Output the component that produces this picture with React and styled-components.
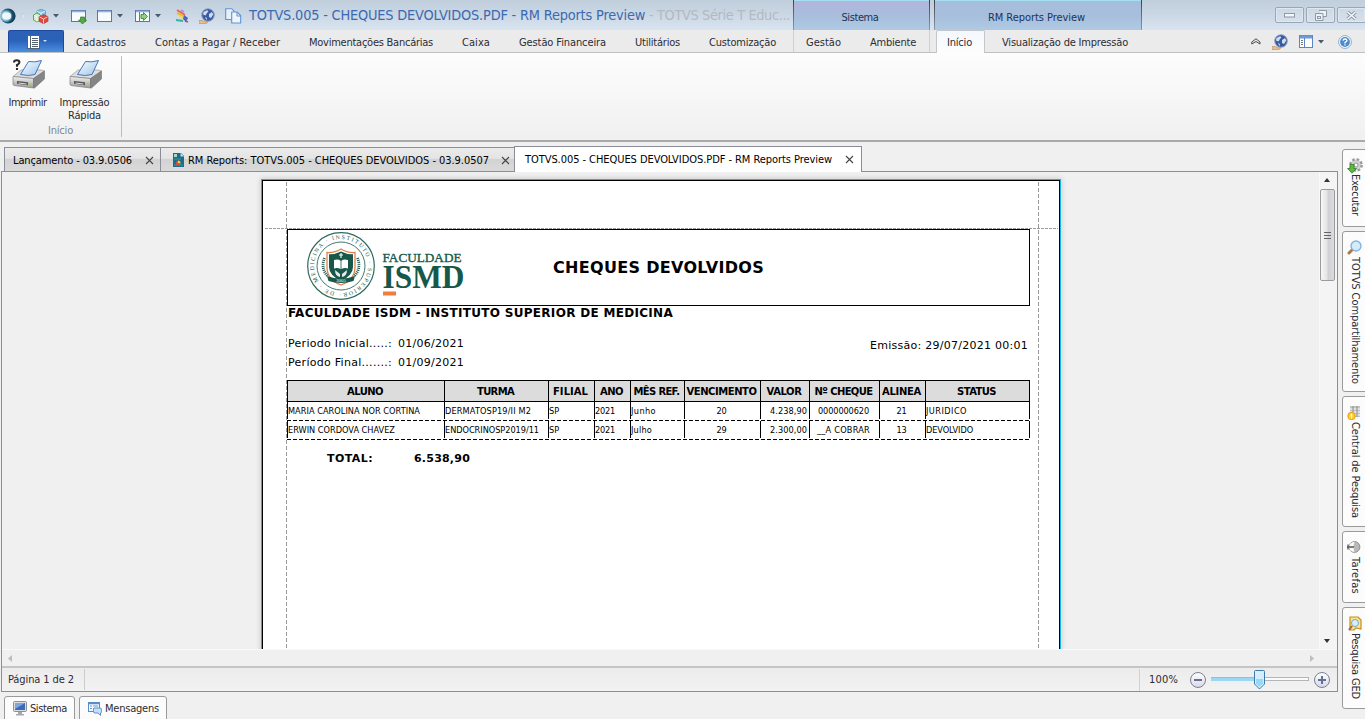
import React, { useLayoutEffect, useRef } from 'react';
import styled, { createGlobalStyle } from 'styled-components';

const Global = createGlobalStyle`
  * { box-sizing: border-box; }
  html, body { margin: 0; padding: 0; overflow: hidden; }
  body {
    background: #f0f0f0;
    font-family: "DejaVu Sans Condensed", "DejaVu Sans", sans-serif;
    font-stretch: condensed;
    font-size: 11px;
    color: #2b2b33;
  }
  svg { display: block; flex: none; }
`;

/* ---------- text with a fixed advance width ---------- */
const FitBox = styled.span`
  display: inline-block;
  flex: none;
  white-space: pre;
  ${(p) => (p.$vertical ? `height: ${p.$w}px; writing-mode: vertical-rl;` : `width: ${p.$w}px;`)}
`;
function Fit({ w, vertical, children }) {
  const ref = useRef(null);
  useLayoutEffect(() => {
    const el = ref.current;
    el.style.letterSpacing = '0px';
    const r = el.getBoundingClientRect();
    const natural = vertical ? r.height : r.width;
    el.style.letterSpacing = `${(w - natural) / String(children).length}px`;
  }, [w, vertical, children]);
  return (
    <FitBox $w={w} $vertical={vertical}>
      <span ref={ref}>{children}</span>
    </FitBox>
  );
}

/* ---------- shell ---------- */
const Window = styled.div`
  width: 1365px;
  height: 719px;
  display: flex;
  flex-direction: column;
  background: #f0f0f0;
  overflow: hidden;
`;
const TitleBar = styled.header`
  height: 30px;
  flex: none;
  display: flex;
  background: linear-gradient(#c1cedb, #c9d6e3 45%, #d9e5f1);
`;
const QuickBar = styled.div`
  width: 249px;
  display: flex;
  align-items: center;
  padding-top: 2px;
`;
const Slot = styled.span`
  display: flex;
  align-items: center;
  gap: 4px;
  width: ${(p) => p.$w}px;
`;
const Title = styled.h1`
  margin: 0;
  width: 544px;
  font-size: 14.4px;
  font-weight: 400;
  line-height: 31px;
  color: #3c69b0;
  white-space: nowrap;
  display: flex;
`;
const Faded = styled.span`
  color: #b4b9c0;
`;
const ContextGroup = styled.div`
  width: ${(p) => p.$w}px;
  margin-right: ${(p) => p.$gap || 0}px;
  padding: 4px 3px 0 0;
  border: solid #4c5560;
  border-width: 0 1px;
  border-image: linear-gradient(#3a4048, #8f9dab) 1;
  background: linear-gradient(#a5e0f2 0 1px, ${(p) => p.$tint} 1px, #a7bfdc 55%, #afcae4);
  color: #1d3357;
  display: flex;
  justify-content: center;
  align-items: center;
`;
const Controls = styled.div`
  margin-left: auto;
  display: flex;
  gap: 2px;
  padding-top: 7px;
  margin-right: -1px;
`;
const ControlButton = styled.button`
  width: 29px;
  height: 16px;
  padding: 0;
  border: 1px solid #9aa7b5;
  border-radius: 2px;
  background: linear-gradient(#ccd8e4, #d6e1ec);
  box-shadow: inset 0 0 0 1px #dfe8f1;
  display: flex;
  align-items: center;
  justify-content: center;
`;

/* ---------- ribbon ---------- */
const TabStrip = styled.nav`
  height: 23px;
  flex: none;
  display: flex;
  background: #ebebeb;
  border-bottom: 1px solid #bfc0c2;
`;
const AppButton = styled.button`
  margin-left: 8px;
  width: 56px;
  height: 22px;
  padding: 0 0 0 1px;
  border: 1px solid #1d4a9e;
  border-bottom: 0;
  border-radius: 2px 2px 0 0;
  background: linear-gradient(#2b60b4, #2a62ba 45%, #4a8fe0);
  display: flex;
  align-items: center;
  justify-content: center;
  gap: 3px;
`;
const MenuTabs = styled.div`
  display: flex;
  gap: 29px;
  width: ${(p) => p.$w}px;
  padding-left: ${(p) => p.$pad}px;
  line-height: 25px;
  border-right: ${(p) => (p.$edge ? '1px solid #cfd0d2' : '0')};
  border-left: ${(p) => (p.$edge ? '1px solid #cfd0d2' : '0')};
`;
const ActiveTab = styled.div`
  width: 49px;
  height: 23px;
  margin: 0 0 -1px 6px;
  padding-left: 10px;
  line-height: 23px;
  border: 1px solid #c4c6c9;
  border-bottom: 0;
  border-radius: 2px 2px 0 0;
  background: linear-gradient(#f4f8fd, #fdfdfd);
`;
const StripTools = styled.div`
  margin-left: auto;
  width: 114px;
  display: flex;
  align-items: center;
  padding-top: 1px;
`;
const Ribbon = styled.section`
  height: 89px;
  flex: none;
  display: flex;
  background: linear-gradient(#fdfdfd, #f0f0f0);
  border-bottom: 2px solid #b9b9b9;
  border-image: linear-gradient(#d3d3d3, #a9a9a9) 1;
`;
const RibbonGroup = styled.div`
  width: 122px;
  height: 81px;
  margin-top: 3px;
  border-right: 1px solid #bdbdbd;
  display: flex;
  flex-direction: column;
`;
const RibbonButtons = styled.div`
  display: flex;
  height: 69px;
`;
const RibbonButton = styled.div`
  width: ${(p) => p.$w}px;
  display: flex;
  flex-direction: column;
  align-items: center;
  line-height: 13px;
  svg { margin-bottom: 4px; }
`;
const GroupCaption = styled.div`
  color: #7f8791;
  padding-left: 48px;
  line-height: 13px;
`;

/* ---------- documents ---------- */
const Body = styled.div`
  flex: none;
  height: 550px;
  display: flex;
  padding-top: 4px;
`;
const Workspace = styled.main`
  width: 1342px;
  display: flex;
  flex-direction: column;
`;
const DocTabs = styled.div`
  height: 25px;
  flex: none;
  display: flex;
  align-items: flex-end;
  padding-left: 4px;
  color: #000;
`;
const DocTab = styled.div`
  width: ${(p) => p.$w}px;
  height: ${(p) => (p.$active ? 26 : 24)}px;
  margin-bottom: ${(p) => (p.$active ? -1 : 0)}px;
  padding: ${(p) => (p.$active ? '0 7px 1px 10px' : `1px ${p.$pr}px 0 8px`)};
  border: 1px solid #8b8d98;
  border-bottom-width: 0;
  border-right-width: ${(p) => (p.$active ? 1 : 0)}px;
  background: ${(p) => (p.$active ? '#fff' : 'linear-gradient(#ebebeb, #e4e4e4 45%, #d3d3d3 50%, #dadada)')};
  position: relative;
  z-index: ${(p) => (p.$active ? 1 : 0)};
  display: flex;
  align-items: center;
  gap: 4px;
  & > svg:last-child { margin-left: auto; }
`;
const Viewer = styled.section`
  width: 1337px;
  height: 521px;
  margin-left: 1px;
  border: 1px solid #8b8d98;
  display: flex;
  flex-direction: column;
`;
const Canvas = styled.div`
  height: 477px;
  display: flex;
`;
const PaperArea = styled.div`
  width: 1317px;
  padding: 7px 0 0 259px;
  overflow: hidden;
`;
const Paper = styled.article`
  position: relative;
  width: 800px;
  height: 600px;
  padding: 0 20px 0 23px;
  background: #fff;
  border: 1px solid #19b5ea;
  box-shadow: inset 0 0 0 1px #000, 0 0 5px 1px rgba(0, 0, 0, 0.13);
  font-family: "DejaVu Sans", sans-serif;
  font-stretch: normal;
  color: #000;
`;
const MarginLine = styled.i`
  position: absolute;
  left: 3px;
  top: 48px;
  width: 793px;
  height: 1px;
  background: repeating-linear-gradient(90deg, #9a9a9a 0 3px, transparent 3px 4px);
`;
const PageBody = styled.div`
  margin-left: 1px;
  width: 753px;
  height: 596px;
  padding: 49px 0 0 1px;
  background:
    repeating-linear-gradient(#9a9a9a 0 4px, transparent 4px 6px) 0 2px / 1px 100% no-repeat,
    repeating-linear-gradient(#9a9a9a 0 4px, transparent 4px 6px) 100% 2px / 1px 100% no-repeat;
`;
const ReportHeader = styled.div`
  width: 743px;
  height: 77px;
  border: 1px solid #000;
  display: flex;
  align-items: center;
  padding-left: 18px;
`;
const LogoSlot = styled.div`
  width: 247px;
  padding-bottom: 3px;
`;
const ReportTitle = styled.h2`
  margin: 0;
  font-size: 16px;
  line-height: 20px;
`;
const OrgName = styled.div`
  font-size: 12px;
  font-weight: 700;
  line-height: 14px;
  padding-left: 1px;
`;
const Meta = styled.div`
  height: 60px;
  width: 741px;
  padding: 14px 0 0 1px;
  display: flex;
  justify-content: space-between;
  line-height: 19px;
`;
const Periods = styled.div``;
const PeriodRow = styled.div`
  display: flex;
  gap: 6px;
  height: 19px;
`;
const Issued = styled.div`
  padding-top: 2px;
`;
const Table = styled.div`
  width: 743px;
`;
const columns = '157px 104px 46px 36px 54px 76px 49px 70px 46px 105px';
const HeadRow = styled.div`
  height: 22px;
  display: grid;
  grid-template-columns: ${columns};
  font-weight: 700;
  font-size: 10px;
`;
const HeadCell = styled.div`
  border: solid #000;
  border-width: 1px 0 1px 1px;
  background: #dcdcdc;
  display: flex;
  align-items: center;
  justify-content: center;
  padding: 1px 2px 0 0;
  &:last-child { border-right-width: 1px; }
`;
const DataRow = styled.div`
  height: 19px;
  display: grid;
  grid-template-columns: ${columns};
  font-size: 8.2px;
  background: repeating-linear-gradient(90deg, #000 0 4px, transparent 4px 6px) 0 100% / 100% 1px no-repeat;
`;
const Cell = styled.div`
  height: 17px;
  border-left: 1px solid #000;
  display: flex;
  align-items: center;
  justify-content: ${(p) => p.$align || 'flex-start'};
  padding-right: ${(p) => (p.$align ? 2 : 0)}px;
  &:last-child { border-right: 1px solid #000; }
`;
const Total = styled.div`
  display: flex;
  gap: 41px;
  padding: 11px 0 0 40px;
  font-weight: 700;
  font-size: 11px;
  line-height: 15px;
`;

/* ---------- scrollbars and status ---------- */
const VScroll = styled.div`
  width: 18px;
  padding: 6px 3px 6px 0;
  background: #f4f4f4;
  border-left: 1px solid #fafafa;
  display: flex;
  flex-direction: column;
  align-items: center;
`;
const Thumb = styled.div`
  width: 15px;
  height: 92px;
  margin: 7px 0 auto;
  border: 1px solid #9b9b9b;
  border-radius: 2px;
  background: linear-gradient(90deg, #f7f7f7, #e5e5e7 45%, #cfd0d4 55%, #dcdcde);
  display: flex;
  align-items: center;
  justify-content: center;
`;
const HScroll = styled.div`
  height: 17px;
  padding: 0 23px 0 6px;
  background: #f0f0f0;
  border-top: 1px solid #fafafa;
  display: flex;
  align-items: center;
  justify-content: space-between;
`;
const StatusBar = styled.footer`
  height: 25px;
  display: flex;
  align-items: center;
  border-top: 2px solid #cacaca;
  border-image: linear-gradient(#c4c4c4, #dedede) 1;
  background: linear-gradient(#ececec, #f2f2f2);
`;
const PageInfo = styled.div`
  width: 83px;
  height: 21px;
  padding-left: 6px;
  line-height: 21px;
  border-right: 1px solid #cccccc;
`;
const ZoomBox = styled.div`
  margin-left: auto;
  width: 198px;
  height: 22px;
  padding-left: 9px;
  border-left: 1px solid #d2d2d2;
  display: flex;
  align-items: center;
`;
const RoundButton = styled.button`
  width: 16px;
  height: 16px;
  margin-left: ${(p) => p.$ml}px;
  padding: 0;
  border: 1px solid #7b8096;
  border-radius: 50%;
  background: linear-gradient(#fff, #d7d9e4);
  display: flex;
  align-items: center;
  justify-content: center;
`;
const BottomTabs = styled.div`
  display: flex;
  gap: 4px;
  padding: 4px 0 0 4px;
`;
const BottomTab = styled.div`
  width: ${(p) => p.$w}px;
  height: 26px;
  padding: 0 0 1px 8px;
  border: 1px solid #9a9a9a;
  border-radius: 3px 3px 0 0;
  background: #fcfcfc;
  display: flex;
  align-items: center;
  gap: 3px;
`;
const Dock = styled.aside`
  width: 23px;
  padding-top: 3px;
  display: flex;
  flex-direction: column;
  gap: 4px;
`;
const DockTab = styled.div`
  width: 26px;
  height: ${(p) => p.$h}px;
  flex: none;
  padding: 8px 0 0 4px;
  border: 1px solid #9a9a9a;
  border-radius: 3px 0 0 3px;
  background: #fcfcfc;
  display: flex;
  flex-direction: column;
  align-items: flex-start;
  gap: ${(p) => p.$gap}px;
  line-height: 16px;
`;

/* ---------- icons ---------- */
const Caret = ({ c = '#4a5a6e' }) => (
  <svg width="6" height="4"><path d="M0 0h6L3 3.6z" fill={c} /></svg>
);
const Close = () => (
  <svg width="9" height="9"><path d="M1 1l7 7M8 1L1 8" stroke="#444" strokeWidth="1.1" /></svg>
);
const Orb = () => (
  <svg width="16" height="16" viewBox="0 0 16 16">
    <defs><radialGradient id="orb" cx=".35" cy=".5" r=".7"><stop offset=".25" stopColor="#fff" /><stop offset=".45" stopColor="#6bb5cf" /><stop offset=".65" stopColor="#1b4f70" /><stop offset="1" stopColor="#102c46" /></radialGradient></defs>
    <circle cx="8" cy="8" r="7.6" fill="url(#orb)" /><circle cx="7.6" cy="8" r="3.6" fill="#edf6fa" />
  </svg>
);
const Cubes = () => (
  <svg width="16" height="15" viewBox="0 0 16 15">
    <path d="M8 0l4.500 2v5L8 9 4 7V2z" fill="#7cc5e4" stroke="#3b8ab3" strokeWidth=".6" />
    <path d="M4 4L7.500 6v5L4 13 .5 11V6z" fill="#d6efcf" stroke="#4f9e48" strokeWidth=".9" />
    <path d="M10.500 5.500l4.500 2.200v4.600l-4.500 2.400L6 12.300V7.700z" fill="#dc4a42" stroke="#b23030" strokeWidth=".6" />
    <path d="M6.500 8l4 2 4-2M10.500 10v4.500" stroke="#f9c4bd" fill="none" />
    <path d="M4.200 2.300L8 4.200l4-1.900M8 4.200v2M1.200 6.300L4 8v4.500" stroke="#fff" strokeWidth=".8" fill="none" />
  </svg>
);
const Win = ({ kind }) => (
  <svg width="16" height="15" viewBox="0 0 16 15">
    <rect x=".5" y="1.5" width="14" height="11" fill="#f8fbfe" stroke="#5877ad" />
    <path d="M1 2.5h13" stroke="#8fb2e0" strokeWidth="1.6" />
    {kind === 'down' && <path d="M9.5 8h4v3h2l-4 4-4-4h2z" fill="#57a945" stroke="#2b7d2a" strokeWidth=".7" />}
    {kind === 'play' && <><path d="M4.500 3v9" stroke="#5877ad" /><path d="M6 5.500h2.500V3.500l4 4-4 4V9.500H6z" fill="#8fd07b" stroke="#2b7d2a" strokeWidth=".8" /></>}
  </svg>
);
const Pencils = () => (
  <svg width="13" height="14" viewBox="0 0 13 14">
    <path d="M1 1l8 5" stroke="#e2665a" strokeWidth="2" /><path d="M1 4l8 4" stroke="#f0b92e" strokeWidth="2" />
    <path d="M3 7l7 3" stroke="#f3d75d" strokeWidth="2" /><path d="M0 11l7 1" stroke="#3fae9a" strokeWidth="2" />
    <path d="M8 6l4 3-2 4-3-3z" fill="#4b62c8" /><path d="M5 1l3 2" stroke="#b98ad8" strokeWidth="1.6" /><path d="M9 12l3 1" stroke="#b85a36" strokeWidth="1.5" />
  </svg>
);
const Globe = () => (
  <svg width="16" height="16" viewBox="0 0 16 16">
    <circle cx="9" cy="7" r="6.300" fill="#3a5aa0" stroke="#93a6c8" />
    <path d="M4.500 4L8 2.200l1.500 1L8 5 6.500 7.500 4 6.500zM10 6l3-2 1.200 2.500L12 10l-2-1zM6 9l2 1-.5 2.300z" fill="#cfdcf0" />
    <path d="M0 12.500h3l3 1.300h3l-2 1.900H0z" fill="#e9bd8e" stroke="#b57b48" strokeWidth=".5" />
  </svg>
);
const Copy = () => (
  <svg width="17" height="16" viewBox="0 0 17 16">
    <path d="M.7.7h6l2.500 2.500v8.300H.7z" fill="#e7f0fb" stroke="#5f93d3" strokeWidth="1.1" />
    <path d="M6.700 4h5.500l3.500 3.500V15h-9z" fill="#eef5fd" stroke="#5f93d3" strokeWidth="1.1" /><path d="M12 4v4h4" fill="none" stroke="#5f93d3" />
  </svg>
);
const Printer = ({ ask }) => (
  <svg width="36" height="36" viewBox="0 0 36 36">
    <defs>
      <linearGradient id="pb" x2="0" y2="1"><stop stopColor="#f2f2f2" /><stop offset="1" stopColor="#9a9a9a" /></linearGradient>
      <linearGradient id="pp" x2="1" y2="1"><stop stopColor="#fff" /><stop offset="1" stopColor="#9cc3ea" /></linearGradient>
    </defs>
    <path d="M3 20.500l8-6.500h20l3.500 1-11 7.500z" fill="#dedede" stroke="#9a9a9a" strokeWidth=".7" />
    <path d="M3 20.500l20.500 2v9.500L4 29.500q-1-.3-1-1.500z" fill="url(#pb)" stroke="#808080" strokeWidth=".7" />
    <path d="M23.500 22.500l11-7.500v8L24.500 32h-1z" fill="#858585" stroke="#707070" strokeWidth=".6" />
    <path d="M10.500 18.500l8-13q6 1.200 13-1l-6.500 14q-6 2-14.500 0z" fill="url(#pp)" stroke="#4476b4" strokeWidth="1" />
    <path d="M7 25l11 1.200v3L7 27.700z" fill="#555" /><path d="M8.500 27l8 1" stroke="#ddd" strokeWidth="1" /><circle cx="20.500" cy="28" r="1.100" fill="#9ada4c" />
    {ask && <path d="M4 6.500Q4 4.200 6.700 4.200t2.700 2Q9.400 8 7 9v1.800M7 12v2" fill="none" stroke="#2b2b2b" strokeWidth="2.100" />}
  </svg>
);
const ReportDoc = () => (
  <svg width="11" height="14" viewBox="0 0 11 14">
    <path d="M0 0h8l3 3v11H0z" fill="#1b6b8c" /><path d="M7.500 0v3.500H11z" fill="#c5e4ec" /><path d="M1 1h3v3H1z" fill="#a8dbc0" />
    <path d="M1 6h7M1 12h9" stroke="#3f95ac" /><circle cx="5" cy="10" r="2.300" fill="#e0483d" /><path d="M5 10V7.500a2.500 2.500 0 012.500 3z" fill="#f2cc42" />
  </svg>
);
const DockIcon = ({ kind }) => (
  <svg width="16" height="16" viewBox="0 0 16 16">
    {kind === 'run' && <><circle cx="9" cy="7" r="5.500" fill="#d8d8d8" stroke="#999" strokeWidth="2.800" strokeDasharray="2.500 1.800" /><circle cx="9" cy="7" r="4.500" fill="#d0d0d0" /><circle cx="9" cy="7" r="2" fill="#fff" stroke="#999" /><path d="M3 6.500h4v4h2.500L5 15.200.5 10.500H3z" fill="#5fbb3f" stroke="#2c7d27" strokeWidth=".8" /></>}
    {kind === 'search' && <><path d="M2 13l4-4" stroke="#b07847" strokeWidth="3" strokeLinecap="round" /><circle cx="9" cy="6" r="5" fill="#d3ebfb" stroke="#86b3dc" strokeWidth="1.400" /></>}
    {kind === 'central' && <><path d="M3 1h10v11H3z" fill="#c4c4c4" /><path d="M3 4h10M3 7h10M3 10h10" stroke="#fff" /><path d="M6 1v11M10 1v11" stroke="#8a8a8a" /><circle cx="4.500" cy="11" r="3.700" fill="#ffd02c" stroke="#e3a010" /><path d="M4.500 8.700v3M4.500 12.500v1" stroke="#fff" strokeWidth="1.300" /></>}
    {kind === 'task' && <><circle cx="7.500" cy="7" r="5.400" fill="#b9b9b9" stroke="#909090" /><path d="M7.500 2a5 5 0 000 10q-2-5 0-10z" fill="#fff" /><path d="M5 2.500a5 5 0 000 9z" fill="#f8f8f8" /><path d="M0 7h7M1 4.500v5" stroke="#555" strokeWidth="1.300" /></>}
    {kind === 'ged' && <><path d="M3 1h8l3 3v9L9 12l-2 2H3z" fill="#ffe38c" stroke="#c58e1c" strokeWidth="1.200" /><circle cx="8" cy="7" r="3.500" fill="#d8eefb" stroke="#76a7d1" /><path d="M5 10l-3 4" stroke="#9c6b31" strokeWidth="2" /></>}
  </svg>
);
const Monitor = () => (
  <svg width="14" height="15" viewBox="0 0 14 15">
    <rect x=".5" y=".5" width="13" height="10" rx="1" fill="#d9dce0" stroke="#8b9097" /><rect x="2" y="2" width="10" height="7" fill="#3b6ab8" /><path d="M2 2h10L2 8z" fill="#7fa5dd" />
    <path d="M5 11h4v2H5zM3 13h8v1.500H3z" fill="#a5a9ae" />
  </svg>
);
const Messages = () => (
  <svg width="14" height="14" viewBox="0 0 14 14">
    <rect x=".5" y=".5" width="11" height="9" fill="#f1f7fd" stroke="#5a8dc8" /><path d="M1 1.500h10" stroke="#5a8dc8" strokeWidth="1.500" /><path d="M2 4h2M5 4h5M2 6.500h2M5 6.500h2" stroke="#6d9bd1" />
    <path d="M6.500 6h5.500q1.500 0 1.500 1.500v2q0 1.500-1 1.500v2.500L10 11H7q-1.500 0-1.500-1.500v-2Q5.500 6 6.500 6z" fill="#c3e0f8" stroke="#4d86c4" strokeWidth=".9" />
  </svg>
);
const Seal = styled.svg`
  overflow: visible;
  text { font-family: "Liberation Serif", serif; fill: #17584a; }
`;
const Logo = () => (
  <Seal width="170" height="70" viewBox="0 0 170 70">
    <defs><path id="ring" d="M35 35m0 27a27 27 0 1 1 .1 0" /></defs>
    <g fill="none" stroke="#2e6a5c"><circle cx="35" cy="35" r="33.300" strokeWidth="1.200" /><circle cx="35" cy="35" r="24" strokeWidth=".9" /></g>
    <text fontSize="5.800"><textPath href="#ring" textLength="167">· DE · MEDICINA · INSTITUTO · SUPERIOR </textPath></text>
    <path d="M35 18q6 4 14 3.500V36q0 13-14 18Q21 49 21 36V21.500Q29 22 35 18z" fill="#fff" stroke="#e0824c" strokeWidth="1.300" />
    <path d="M35 20.500q6 3 12 2.700V36q0 8-12 14-12-6-12-14V23.200q6 .3 12-2.700z" fill="#17584a" />
    <path d="M35 22v5M33 24h4" stroke="#fff" strokeWidth="1.100" />
    <path d="M28 29q4-1.500 6.600.8V38q-3-1.500-6.600-.5zM42 29q-4-1.500-6.600.8V38q3-1.500 6.600-.5z" fill="#fff" />
    <path d="M29 39l5 4v3q-5-1-5-7zM41 39l-5 4v3q5-1 5-7z" fill="#e4ece9" />
    <path d="M21 45q14 5 28 0l-1.500 5q-12.500 4-25 0z" fill="#17584a" />
    <text x="35" y="50.500" fontSize="4.800" textAnchor="middle" style={{ fill: '#fff' }}>2005</text>
    <g fill="none" stroke="#17584a" strokeWidth="2.800" strokeDasharray="1 1"><path d="M18.500 27q-4 10 3 18M51.500 27q4 10-3 18" /></g>
    <text x="76.500" y="30.500" fontSize="13.500" stroke="#17584a" strokeWidth=".35" textLength="79" lengthAdjust="spacingAndGlyphs">FACULDADE</text>
    <text x="76.500" y="57" fontSize="34.500" fontWeight="700" textLength="82" lengthAdjust="spacingAndGlyphs">ISMD</text>
    <rect x="77" y="60.500" width="13" height="4" fill="#f07e3a" />
  </Seal>
);

/* ---------- data ---------- */
const menus = [['Cadastros', 50], ['Contas a Pagar / Receber', 125], ['Movimentações Bancárias', 124], ['Caixa', 28], ['Gestão Financeira', 87], ['Utilitários', 45], ['Customização', 67]];
const heads = [['ALUNO', 36], ['TURMA', 37], ['FILIAL', 35], ['ANO', 23], ['MÊS REF.', 46], ['VENCIMENTO', 70], ['VALOR', 35], ['Nº CHEQUE', 58], ['ALINEA', 39], ['STATUS', 39]];
const rows = [
  [['MARIA CAROLINA NOR CORTINA', 132], ['DERMATOSP19/II M2', 86], ['SP', 10], ['2021', 20], ['Junho', 25], ['20', 10], ['4.238,90', 37], ['0000000620', 51], ['21', 10], ['JURIDICO', 41]],
  [['ERWIN CORDOVA CHAVEZ', 107], ['ENDOCRINOSP2019/11', 94], ['SP', 10], ['2021', 20], ['Julho', 21], ['29', 10], ['2.300,00', 37], ['__A COBRAR', 53], ['13', 10], ['DEVOLVIDO', 47]],
];
const align = [null, null, null, null, null, 'center', 'flex-end', 'center', 'center', null];
const dock = [['run', 'Executar', 42, 78, 0], ['search', 'TOTVS Compartilhamento', 127, 161, 1], ['central', 'Central de Pesquisa', 96, 131, 1], ['task', 'Tarefas', 37, 72, 1], ['ged', 'Pesquisa GED', 66, 102, 1]];

export default function App() {
  return (
    <Window>
      <Global />
      <TitleBar>
        <QuickBar>
          <Slot $w={33}><Orb /><svg width="4" height="6"><rect x="2" width="2" height="5" y="1" fill="#e9eff6" stroke="#b0bccb" strokeWidth=".5" /></svg></Slot>
          <Slot $w={38}><Cubes /><Caret /></Slot>
          <Slot $w={26}><Win kind="down" /></Slot>
          <Slot $w={38}><Win /><Caret /></Slot>
          <Slot $w={41}><Win kind="play" /><Caret /></Slot>
          <Slot $w={23}><Pencils /></Slot>
          <Slot $w={26}><Globe /></Slot>
          <Slot $w={20}><Copy /></Slot>
        </QuickBar>
        <Title>
          <Fit w={400}>{'TOTVS.005 - CHEQUES DEVOLVIDOS.PDF - RM Reports Preview '}</Fit>
          <Faded><Fit w={141}>- TOTVS Série T Educ...</Fit></Faded>
        </Title>
        <ContextGroup $w={137} $gap={4} $tint="#b3b4dc"><Fit w={37}>Sistema</Fit></ContextGroup>
        <ContextGroup $w={208} $tint="#a7bddb"><Fit w={97}>RM Reports Preview</Fit></ContextGroup>
        <Controls>
          <ControlButton><svg width="11" height="5"><rect x=".5" y=".5" width="10" height="3.500" fill="#f4f7fa" stroke="#8d98a5" /></svg></ControlButton>
          <ControlButton><svg width="12" height="11"><path d="M4 .5h7.500v6H8M.5 3.500H8v7H.5z" fill="#eef2f6" stroke="#8d98a5" /><rect x="2.500" y="6.500" width="3" height="2" fill="none" stroke="#8d98a5" /></svg></ControlButton>
          <ControlButton><svg width="11" height="9"><path d="M1.500 1l8 7M9.500 1l-8 7" stroke="#8d98a5" strokeWidth="3.400" /><path d="M1.500 1l8 7M9.500 1l-8 7" stroke="#f4f7fa" strokeWidth="1.600" /></svg></ControlButton>
        </Controls>
      </TitleBar>
      <TabStrip>
        <AppButton>
          <svg width="13" height="14"><rect x=".5" y=".5" width="12" height="13" fill="#fff" stroke="#56606f" /><path d="M3.500 1v12" stroke="#56606f" /><path d="M5 3.500h6M5 5.500h6M5 7.500h6M5 9.500h6M5 11.500h6" stroke="#56606f" /></svg>
          <svg width="4" height="3"><path d="M0 0h4L2 2z" fill="#cfe0f5" /></svg>
        </AppButton>
        <MenuTabs $w={729} $pad={12}>{menus.map(([t, w]) => <Fit key={t} w={w}>{t}</Fit>)}</MenuTabs>
        <MenuTabs $w={137} $pad={12} $edge><Fit w={35}>Gestão</Fit><Fit w={46}>Ambiente</Fit></MenuTabs>
        <ActiveTab><Fit w={25}>Início</Fit></ActiveTab>
        <MenuTabs $w={158} $pad={17}><Fit w={126}>Visualização de Impressão</Fit></MenuTabs>
        <StripTools>
          <Slot $w={21}><svg width="10" height="8"><path d="M.8 4L5 .8 9 4M.8 4v2L5 3.500 9 6V4" fill="none" stroke="#4b4b4b" /></svg></Slot>
          <Slot $w={27}><Globe /></Slot>
          <Slot $w={39}>
            <svg width="15" height="14"><rect x=".5" y=".5" width="13" height="12" fill="#fff" stroke="#5a86c6" /><path d="M1 2h12" stroke="#6e9bd8" strokeWidth="3" /><path d="M5.500 3v10" stroke="#5a86c6" /><path d="M2 5.500h2M2 7.500h2M2 9.500h2" stroke="#777" /></svg>
            <Caret />
          </Slot>
          <svg width="14" height="14" viewBox="0 0 14 14"><circle cx="7" cy="7" r="6.400" fill="#fff" stroke="#8fa9cb" /><circle cx="7" cy="7" r="4.900" fill="#4d8bcb" /><path d="M5 5.600Q5.200 4 7 4t2 1.600Q9 6.600 7 7.400v1M7 9.300v1.300" fill="none" stroke="#fff" strokeWidth="1.300" /></svg>
        </StripTools>
      </TabStrip>
      <Ribbon>
        <RibbonGroup>
          <RibbonButtons>
            <RibbonButton $w={55}><Printer ask /><Fit w={38}>Imprimir</Fit></RibbonButton>
            <RibbonButton $w={59}><Printer /><Fit w={50}>Impressão</Fit><Fit w={33}>Rápida</Fit></RibbonButton>
          </RibbonButtons>
          <GroupCaption><Fit w={25}>Início</Fit></GroupCaption>
        </RibbonGroup>
      </Ribbon>
      <Body>
        <Workspace>
          <DocTabs>
            <DocTab $w={156} $pr={6}><Fit w={119}>Lançamento - 03.9.0506</Fit><Close /></DocTab>
            <DocTab $w={354} $pr={4}><svg width="0" height="1" /><ReportDoc /><Fit w={301}>RM Reports: TOTVS.005 - CHEQUES DEVOLVIDOS - 03.9.0507</Fit><Close /></DocTab>
            <DocTab $w={348} $active><Fit w={307}>TOTVS.005 - CHEQUES DEVOLVIDOS.PDF - RM Reports Preview</Fit><Close /></DocTab>
          </DocTabs>
          <Viewer>
            <Canvas>
              <PaperArea>
                <Paper>
                  <MarginLine />
                  <PageBody>
                    <ReportHeader>
                      <LogoSlot><Logo /></LogoSlot>
                      <ReportTitle><Fit w={211}>CHEQUES DEVOLVIDOS</Fit></ReportTitle>
                    </ReportHeader>
                    <OrgName><Fit w={385}>FACULDADE ISDM - INSTITUTO SUPERIOR DE MEDICINA</Fit></OrgName>
                    <Meta>
                      <Periods>
                        <PeriodRow><Fit w={104}>Periodo Inicial.....:</Fit><Fit w={66}>01/06/2021</Fit></PeriodRow>
                        <PeriodRow><Fit w={104}>Período Final.......:</Fit><Fit w={66}>01/09/2021</Fit></PeriodRow>
                      </Periods>
                      <Issued><Fit w={158}>Emissão: 29/07/2021 00:01</Fit></Issued>
                    </Meta>
                    <Table>
                      <HeadRow>{heads.map(([t, w]) => <HeadCell key={t}><Fit w={w}>{t}</Fit></HeadCell>)}</HeadRow>
                      {rows.map((r, i) => (
                        <DataRow key={i}>{r.map(([t, w], j) => <Cell key={j} $align={align[j]}><Fit w={w}>{t}</Fit></Cell>)}</DataRow>
                      ))}
                    </Table>
                    <Total><Fit w={46}>TOTAL:</Fit><Fit w={56}>6.538,90</Fit></Total>
                  </PageBody>
                </Paper>
              </PaperArea>
              <VScroll>
                <svg width="6" height="4"><path d="M0 4h6L3 0z" fill="#333" /></svg>
                <Thumb><svg width="7" height="9"><path d="M0 1.500h7M0 4.500h7M0 7.500h7" stroke="#666" /></svg></Thumb>
                <svg width="6" height="4"><path d="M0 0h6L3 4z" fill="#333" /></svg>
              </VScroll>
            </Canvas>
            <HScroll>
              <svg width="4" height="7"><path d="M4 0v7L0 3.500z" fill="#bdbdbd" /></svg>
              <svg width="4" height="7"><path d="M0 0v7l4-3.500z" fill="#bdbdbd" /></svg>
            </HScroll>
            <StatusBar>
              <PageInfo><Fit w={66}>Página 1 de 2</Fit></PageInfo>
              <ZoomBox>
                <Fit w={29}>100%</Fit>
                <RoundButton $ml={12}><svg width="8" height="8"><path d="M0 4h8" stroke="#666f9c" strokeWidth="2" /></svg></RoundButton>
                <svg width="108" height="20" viewBox="0 0 108 20">
                  <rect x="5.500" y="7.500" width="97" height="3" fill="#fafafa" stroke="#b5b5b8" />
                  <rect x="5" y="8" width="44" height="3" fill="#9bd7f4" />
                  <path d="M48.500 1.500q0-1 1-1h8q1 0 1 1V14l-5 5-5-5z" fill="#d3eefc" stroke="#3d7ba6" /><path d="M50 9h7v4.500l-3.500 3.500L50 13.500z" fill="#98d8f6" />
                </svg>
                <RoundButton $ml={0}><svg width="8" height="8"><path d="M0 4h8M4 0v8" stroke="#666f9c" strokeWidth="2" /></svg></RoundButton>
              </ZoomBox>
            </StatusBar>
          </Viewer>
        </Workspace>
        <Dock>
          {dock.map(([k, t, w, h, g]) => (
            <DockTab key={k} $h={h} $gap={g}><DockIcon kind={k} /><Fit w={w} vertical>{t}</Fit></DockTab>
          ))}
        </Dock>
      </Body>
      <BottomTabs>
        <BottomTab $w={71}><Monitor /><Fit w={37}>Sistema</Fit></BottomTab>
        <BottomTab $w={88}><Messages /><Fit w={54}>Mensagens</Fit></BottomTab>
      </BottomTabs>
    </Window>
  );
}
